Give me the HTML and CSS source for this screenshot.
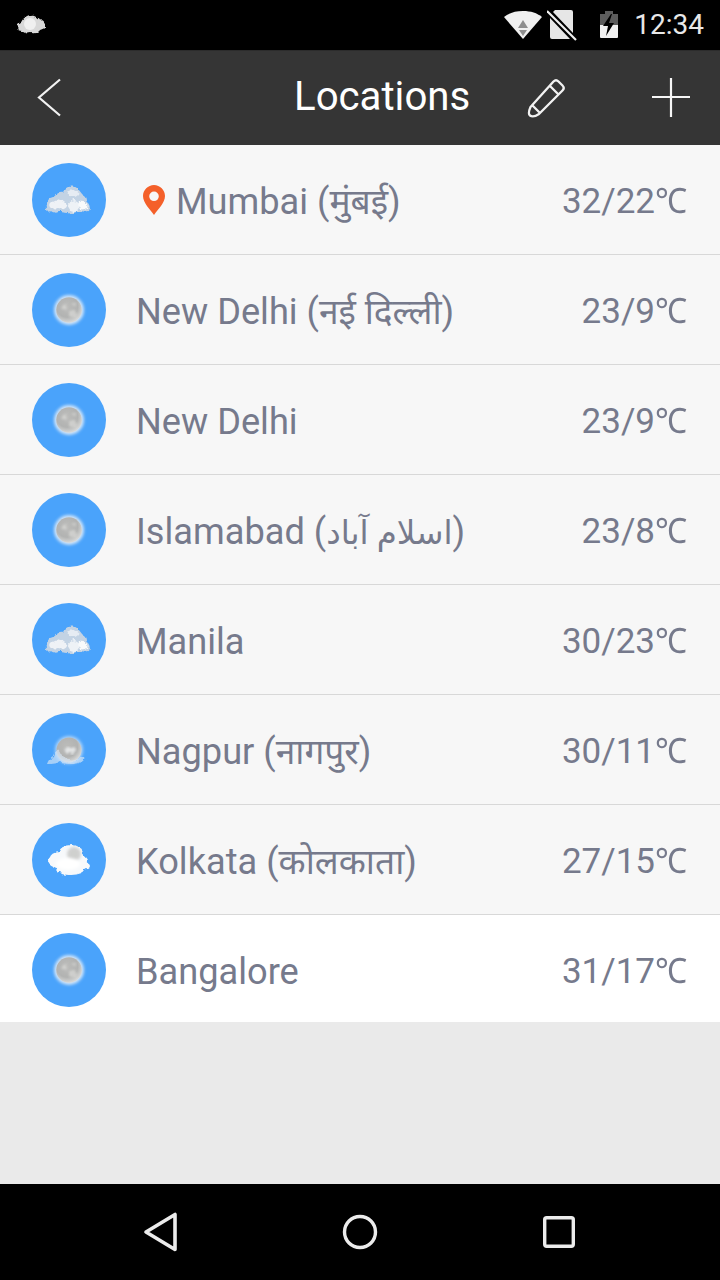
FILE: index.html
```html
<!DOCTYPE html>
<html lang="en">
<head>
<meta charset="utf-8">
<title>Locations</title>
<link rel="stylesheet" href="styles.css">
</head>
<body>
<svg class="defs" width="0" height="0" aria-hidden="true">
  <defs>
    <filter id="soft" x="-30%" y="-30%" width="160%" height="160%"><feGaussianBlur stdDeviation="0.6"/></filter>
    <filter id="halo" x="-40%" y="-40%" width="180%" height="180%"><feGaussianBlur stdDeviation="1.4"/></filter>
    <filter id="fluff" x="-20%" y="-20%" width="140%" height="140%">
      <feTurbulence type="fractalNoise" baseFrequency="0.16" numOctaves="3" seed="4" result="n"/>
      <feDisplacementMap in="SourceGraphic" in2="n" scale="5" xChannelSelector="R" yChannelSelector="G"/>
      <feGaussianBlur stdDeviation="0.75"/>
    </filter>
    <filter id="mottle" x="-10%" y="-10%" width="120%" height="120%">
      <feTurbulence type="fractalNoise" baseFrequency="0.22" numOctaves="2" seed="9" result="n"/>
      <feDisplacementMap in="SourceGraphic" in2="n" scale="7" xChannelSelector="R" yChannelSelector="B"/>
      <feGaussianBlur stdDeviation="0.8"/>
    </filter>
    <radialGradient id="moonFill" cx="42%" cy="36%" r="70%">
      <stop offset="0" stop-color="#bcbcba"/>
      <stop offset="0.6" stop-color="#b2b3b2"/>
      <stop offset="1" stop-color="#e2e3e2"/>
    </radialGradient>
    <symbol id="cloudy" viewBox="0 0 74 74">
      <g filter="url(#fluff)">
        <path fill="#c3d3e4" d="M15 40c1-4 4-6 7-6 2-3 5-5 8-4 2-3 5-7 9-6 3-1 5 0 7 2 2 2 3 4 5 6 3 1 4 3 4 6 3 2 4 8 1 10-3 1-7 0-10 0-3 2-7 3-10 2-3 0-5-1-8-1-4 1-8 1-10-1-3-2-4-5-3-8z"/>
        <path fill="#eff2f6" d="M18 41c2-3 5-4 8-3 2-2 5-2 6 1 2 0 3 2 2 4-1 3-5 4-8 3-4 1-7 0-8-2-1-1-1-2 0-3z"/>
        <path fill="#e6ecf3" d="M36 28c2-2 5-2 7 0 3 0 4 2 3 4-2 2-5 3-8 2-2-1-3-4-2-6z"/>
        <circle cx="42" cy="43" r="6" fill="#eef2f6"/>
        <path fill="#f8fafb" d="M47 38c3-1 7 0 8 3 1 3 0 5-2 5-2 1-5 0-6-2-1-2-1-4 0-6z"/>
      </g>
    </symbol>
    <symbol id="moon" viewBox="0 0 74 74">
      <circle cx="37" cy="37" r="15" fill="#eef3f8" opacity=".8" filter="url(#halo)"/>
      <circle cx="37" cy="37" r="12.800" fill="url(#moonFill)" filter="url(#soft)"/>
      <g filter="url(#mottle)" fill="#d8d8d5" opacity=".75">
        <ellipse cx="33" cy="34" rx="3.500" ry="2.500"/>
        <ellipse cx="41" cy="41" rx="4" ry="3"/>
        <ellipse cx="42" cy="32" rx="2" ry="2"/>
      </g>
    </symbol>
    <symbol id="moonCloud" viewBox="0 0 74 74">
      <circle cx="37" cy="37" r="14" fill="#eef3f8" opacity=".6" filter="url(#halo)"/>
      <circle cx="37" cy="37" r="12.500" fill="url(#moonFill)" filter="url(#soft)"/>
      <path fill="#e8eaeb" opacity=".9" filter="url(#mottle)" d="M33 36c3-2 8-2 10 0 2 3-1 5-4 5s-8-2-6-5z"/>
      <path fill="#d8e7f6" opacity=".65" filter="url(#fluff)" d="M16 50c1-3 3-6 5-7 1-4 4-6 7-5 2 3 3 7 8 9 5 1 10 0 14-3 3-1 3 2 1 4-3 2-8 3-12 3-4 0-7-1-10-1-4-1-8 1-11 1-1 0-2 0-2-1z"/>
    </symbol>
    <symbol id="cloudMoon" viewBox="0 0 74 74">
      <g filter="url(#fluff)" fill="#f7f9fb">
        <ellipse cx="36" cy="38" rx="20" ry="9"/>
        <ellipse cx="39" cy="30" rx="12" ry="8"/>
        <ellipse cx="27" cy="35" rx="9" ry="6"/>
        <ellipse cx="38" cy="46" rx="14" ry="6"/>
        <ellipse cx="50" cy="42" rx="8" ry="4"/>
      </g>
      <circle cx="42" cy="31" r="7" fill="#c6c6c4" opacity=".8" filter="url(#halo)"/>
      <ellipse cx="36" cy="41" rx="12" ry="6" fill="#ffffff" filter="url(#halo)"/>
    </symbol>
  </defs>
</svg>
<div class="phone">
  <div class="status">
    <svg class="notif" viewBox="0 0 33 24"><path fill="#d8d8d8" filter="url(#fluff)" d="M2 13c1-1 2-2 4-3 1-4 5-7 9-7 5-1 9 1 11 5 2 1 4 4 4 7-2 1-3 1-5 2-1 2-5 4-9 3-4 1-7 0-9-2-2 0-4-1-5-2 1-1 1-2 0-3z"/><circle cx="15" cy="11" r="6" fill="#f0f0f0" filter="url(#soft)"/></svg>
    <div class="status-right">
      <svg class="wifi" viewBox="0 0 38 28"><path fill="#f0f0f0" d="M0 6C5 2 11 0 19 0s14 2 19 6L19 28z"/><path fill="#8e8e8e" d="M19 9l5 8H14z"/><path fill="#8e8e8e" d="M15 19h8l-4 6z"/></svg>
      <svg class="sim" viewBox="0 0 32 32"><path fill="#e6e6e6" d="M8 0h16a2 2 0 0 1 2 2v21L6 2zM3 8l20 21H5a2 2 0 0 1-2-2z"/><path stroke="#f0f0f0" stroke-width="2.200" d="M0 1l29 29"/></svg>
      <svg class="batt" viewBox="0 0 20 30"><path fill="#5c5c5c" d="M6 1h8v3h5v11H1V4h5z"/><path fill="#f2f2f2" d="M1 15h18v12a1 1 0 0 1-1 1H2a1 1 0 0 1-1-1z"/><path fill="#000" d="M12 4L4 16h5l-2 10 8-13h-5l3-9z"/></svg>
      <span class="clock">12:34</span>
    </div>
  </div>
  <header class="bar">
    <svg class="back" viewBox="0 0 26 40"><path d="M24 1.500L3 19.500l21 18" fill="none" stroke="#f2f2f2" stroke-width="2.200"/></svg>
    <h1 class="title">Locations</h1>
    <svg class="pencil" viewBox="0 0 40 40"><path d="M27.500 3.500c1.500-1.500 3.500-1.500 5 0l4 4c1.500 1.500 1.500 3.500 0 5L13 36c-3 2-7 3-9 1.500s-1-5 .5-8.500zM23.500 7.500l9 9M6 27l8 8" fill="none" stroke="#f2f2f2" stroke-width="2.300" stroke-linejoin="round"/></svg>
    <svg class="plus" viewBox="0 0 40 40"><path d="M1 19h38M20 0v39" stroke="#f6f6f6" stroke-width="2.200"/></svg>
  </header>
  <ul class="list">
    <li class="row">
      <span class="badge"><svg class="wx"><use href="#cloudy"/></svg></span>
      <span class="name name-pin"><svg class="pin" viewBox="0 0 22 30"><path fill="#f4602a" fill-rule="evenodd" d="M11 0c6 0 11 5 11 11 0 7-7 13-11 19C7 24 0 18 0 11 0 5 5 0 11 0zm0 6.500a4.800 4.800 0 1 0 0 9.600 4.800 4.800 0 0 0 0-9.600z"/></svg><span>Mumbai (<span class="deva">मुंबई</span>)</span></span>
      <span class="temp">32/22<span class="unit">℃</span></span>
    </li>
    <li class="row">
      <span class="badge"><svg class="wx"><use href="#moon"/></svg></span>
      <span class="name">New Delhi (<span class="deva">नई दिल्ली</span>)</span>
      <span class="temp">23/9<span class="unit">℃</span></span>
    </li>
    <li class="row">
      <span class="badge"><svg class="wx"><use href="#moon"/></svg></span>
      <span class="name">New Delhi</span>
      <span class="temp">23/9<span class="unit">℃</span></span>
    </li>
    <li class="row">
      <span class="badge"><svg class="wx"><use href="#moon"/></svg></span>
      <span class="name">Islamabad (<span class="arabic">اسلام آباد</span>)</span>
      <span class="temp">23/8<span class="unit">℃</span></span>
    </li>
    <li class="row">
      <span class="badge"><svg class="wx"><use href="#cloudy"/></svg></span>
      <span class="name">Manila</span>
      <span class="temp">30/23<span class="unit">℃</span></span>
    </li>
    <li class="row">
      <span class="badge"><svg class="wx"><use href="#moonCloud"/></svg></span>
      <span class="name">Nagpur (<span class="deva">नागपुर</span>)</span>
      <span class="temp">30/11<span class="unit">℃</span></span>
    </li>
    <li class="row">
      <span class="badge"><svg class="wx"><use href="#cloudMoon"/></svg></span>
      <span class="name">Kolkata (<span class="deva">कोलकाता</span>)</span>
      <span class="temp">27/15<span class="unit">℃</span></span>
    </li>
    <li class="row row-active">
      <span class="badge"><svg class="wx"><use href="#moon"/></svg></span>
      <span class="name">Bangalore</span>
      <span class="temp">31/17<span class="unit">℃</span></span>
    </li>
  </ul>
  <div class="spacer"></div>
  <nav class="nav">
    <svg class="nav-back" viewBox="0 0 36 40"><path d="M3 20L32 2.500v35z" fill="none" stroke="#ececec" stroke-width="3.600" stroke-linejoin="round"/></svg>
    <svg class="nav-home" viewBox="0 0 36 36"><circle cx="18" cy="18" r="15.500" fill="none" stroke="#ececec" stroke-width="3.400"/></svg>
    <svg class="nav-recent" viewBox="0 0 32 32"><rect x="1.700" y="1.700" width="28.600" height="28.600" rx="2" fill="none" stroke="#ececec" stroke-width="3.400"/></svg>
  </nav>
</div>
</body>
</html>
```
FILE: styles.css
```css
* {
  box-sizing: border-box;
}

html,
body {
  margin: 0;
  padding: 0;
}

body {
  width: 720px;
  height: 1280px;
  overflow: hidden;
  font-family: Roboto, "Noto Sans", "DejaVu Sans", sans-serif;
}

.defs {
  display: block;
  width: 0;
  height: 0;
}

.phone {
  display: flex;
  flex-direction: column;
  width: 720px;
  height: 1280px;
  background: #eaeaea;
}

.status {
  display: flex;
  flex: 0 0 50px;
  align-items: center;
  justify-content: space-between;
  padding: 0 16px 0 15px;
  background: #000;
}

.notif {
  width: 33px;
  height: 24px;
}

.status-right {
  display: flex;
  align-items: center;
}

.wifi {
  width: 38px;
  height: 28px;
  margin-right: 5px;
}

.sim {
  width: 32px;
  height: 32px;
  margin: 2px 20px 0 0;
}

.batt {
  width: 20px;
  height: 30px;
  margin-right: 15px;
}

.clock {
  color: #e8e8e8;
  font-size: 28px;
  line-height: 34px;
}

.bar {
  display: flex;
  flex: 0 0 95px;
  align-items: center;
  padding-left: 36px;
  background: #353535;
  border-top: 1px solid #2c2c2c;
}

.back {
  width: 26px;
  height: 40px;
}

.title {
  margin: 0 0 2px 232px;
  color: #fff;
  font-size: 40.2px;
  font-weight: 400;
  line-height: 44px;
}

.pencil {
  width: 40px;
  height: 40px;
  margin-left: 56px;
}

.plus {
  width: 40px;
  height: 40px;
  margin-left: 85px;
}

.list {
  margin: 0;
  padding: 0;
  list-style: none;
}

.row {
  display: flex;
  align-items: center;
  height: 110px;
  padding: 0 32px;
  background: #f7f7f7;
  border-bottom: 1px solid #d8d8d8;
}

.row-active {
  height: 107px;
  padding-top: 3px;
  background: #fff;
  border-bottom: 0;
}

.badge {
  display: flex;
  flex: 0 0 74px;
  height: 74px;
  border-radius: 50%;
  background: #4aa3fb;
}

.wx {
  width: 74px;
  height: 74px;
}

.name {
  flex: 1;
  height: 48px;
  margin-left: 30px;
  color: #767a8c;
  font-family: Roboto, "Noto Sans", "Noto Sans Devanagari", "DejaVu Sans", sans-serif;
  font-size: 36.2px;
  line-height: 48px;
  padding-top: 2px;
  white-space: pre;
}

.name-pin {
  display: flex;
  align-items: flex-start;
  margin-left: 37px;
}

.pin {
  flex: none;
  width: 22px;
  height: 30px;
  margin: 7px 11px 0 0;
}

.arabic {
  font-size: 32.5px;
}

.deva {
  font-size: 35.3px;
}

.temp {
  height: 48px;
  padding-top: 2px;
  color: #767a8c;
  font-size: 35px;
  line-height: 48px;
  white-space: nowrap;
}

.unit {
  display: inline-block;
  width: 33px;
  transform: scaleX(.92);
  transform-origin: left center;
}

.spacer {
  flex: 1;
}

.nav {
  display: flex;
  flex: 0 0 96px;
  align-items: center;
  padding-left: 143px;
  background: #000;
}

.nav-back {
  width: 36px;
  height: 40px;
}

.nav-home {
  width: 36px;
  height: 36px;
  margin-left: 163px;
}

.nav-recent {
  width: 32px;
  height: 32px;
  margin-left: 165px;
}
```
